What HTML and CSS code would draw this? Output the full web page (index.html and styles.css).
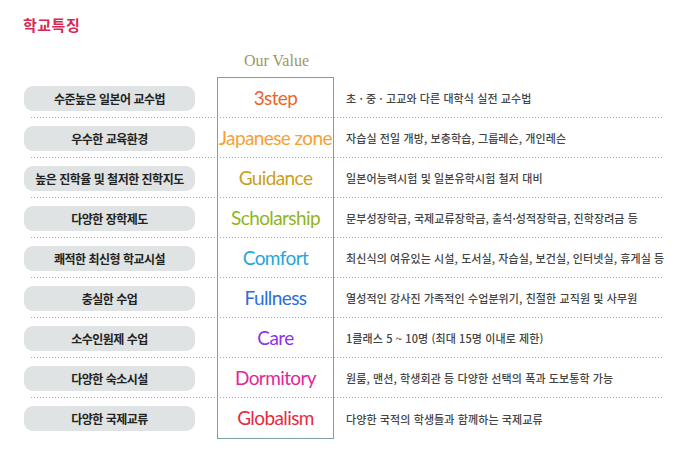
FILE: index.html
```html
<!DOCTYPE html>
<html lang="ko">
<head>
    <meta charset="UTF-8">
    <meta name="viewport" content="width=device-width, initial-scale=1.0">
    <title>학교특징</title>
    <link rel="stylesheet" href="styles.css">
</head>
<body>
    <h2 class="page-title">학교특징</h2>

    <div class="value-head">Our Value</div>

    <div class="feature-list">
        <div class="feature-row">
            <div class="feature-pill">수준높은 일본어 교수법</div>
            <div class="feature-value c-step">3step</div>
            <div class="feature-desc">초 · 중 · 고교와 다른 대학식 실전 교수법</div>
        </div>
        <div class="feature-row">
            <div class="feature-pill">우수한 교육환경</div>
            <div class="feature-value c-japanese">Japanese zone</div>
            <div class="feature-desc">자습실 전일 개방, 보충학습, 그룹레슨, 개인레슨</div>
        </div>
        <div class="feature-row">
            <div class="feature-pill">높은 진학율 및 철저한 진학지도</div>
            <div class="feature-value c-guidance">Guidance</div>
            <div class="feature-desc">일본어능력시험 및 일본유학시험 철저 대비</div>
        </div>
        <div class="feature-row">
            <div class="feature-pill">다양한 장학제도</div>
            <div class="feature-value c-scholar">Scholarship</div>
            <div class="feature-desc">문부성장학금, 국제교류장학금, 출석·성적장학금, 진학장려금 등</div>
        </div>
        <div class="feature-row">
            <div class="feature-pill">쾌적한 최신형 학교시설</div>
            <div class="feature-value c-comfort">Comfort</div>
            <div class="feature-desc">최신식의 여유있는 시설, 도서실, 자습실, 보건실, 인터넷실, 휴게실 등</div>
        </div>
        <div class="feature-row">
            <div class="feature-pill">충실한 수업</div>
            <div class="feature-value c-fullness">Fullness</div>
            <div class="feature-desc">열성적인 강사진 가족적인 수업분위기, 친절한 교직원 및 사무원</div>
        </div>
        <div class="feature-row">
            <div class="feature-pill">소수인원제 수업</div>
            <div class="feature-value c-care">Care</div>
            <div class="feature-desc">1클래스 5 ~ 10명 (최대 15명 이내로 제한)</div>
        </div>
        <div class="feature-row">
            <div class="feature-pill">다양한 숙소시설</div>
            <div class="feature-value c-dormitory">Dormitory</div>
            <div class="feature-desc">원룸, 맨션, 학생회관 등 다양한 선택의 폭과 도보통학 가능</div>
        </div>
        <div class="feature-row">
            <div class="feature-pill">다양한 국제교류</div>
            <div class="feature-value c-global">Globalism</div>
            <div class="feature-desc">다양한 국적의 학생들과 함께하는 국제교류</div>
        </div>
    </div>
</body>
</html>
```

FILE: styles.css
```css
* {
    margin: 0;
    padding: 0;
    box-sizing: border-box;
}

body {
    background-color: #fff;
    color: #444;
    font-family: "Liberation Sans", "Noto Sans CJK KR", sans-serif;
}

.page-title {
    padding: 15px 0 0 23px;
    font-size: 15px;
    line-height: 20px;
    font-weight: bold;
    color: #d42a52;
    letter-spacing: 0.5px;
    font-family: "Noto Sans CJK KR", sans-serif;
}

.value-head {
    margin: 0 0 0 217px;
    width: 117px;
    padding: 16px 0 6px 2px;
    border-bottom: 1px solid #80a0a8;
    text-align: center;
    font-family: "Liberation Serif", serif;
    font-size: 16px;
    line-height: 20px;
    color: #9c9860;
}

/* rows with dotted separator */
.feature-row {
    display: flex;
    align-items: center;
    height: 40px;
    margin-left: 31px;
    width: 633px;
    background: linear-gradient(to right, #aaa 1px, transparent 1px) 0 100% / 3px 1px repeat-x;
}

.feature-row:last-child {
    height: 41px;
    background: none;
}

.feature-pill {
    flex-shrink: 0;
    margin-left: -7px;
    width: 171px;
    height: 25px;
    border-radius: 9px;
    background-color: #dfe3e3;
    display: flex;
    align-items: center;
    justify-content: center;
    font-family: "Noto Sans CJK KR", sans-serif;
    font-size: 12px;
    font-weight: bold;
    color: #222;
    letter-spacing: -0.5px;
}

.feature-value {
    flex-shrink: 0;
    margin-left: 22px;
    width: 117px;
    height: 100%;
    border-left: 1px solid #80a0a8;
    border-right: 1px solid #80a0a8;
    display: flex;
    align-items: center;
    justify-content: center;
    font-family: "Lato", sans-serif;
    font-size: 19px;
    letter-spacing: -0.6px;
    white-space: nowrap;
    padding-bottom: 1px;
}

.feature-row:last-child .feature-value {
    border-bottom: 1px solid #80a0a8;
}

.feature-desc {
    padding-left: 12px;
    font-family: "Noto Sans CJK KR", sans-serif;
    font-size: 11px;
    font-weight: 500;
    color: #444;
    white-space: nowrap;
    letter-spacing: 0.1px;
}

.c-step { color: #f0642a; }
.c-japanese { color: #f7a035; }
.c-guidance { color: #c9a022; }
.c-scholar { color: #8fb521; }
.c-comfort { color: #26a5dc; }
.c-fullness { color: #2b6fd8; }
.c-care { color: #8b35e6; }
.c-dormitory { color: #e0289a; }
.c-global { color: #ea2a3e; }
```
